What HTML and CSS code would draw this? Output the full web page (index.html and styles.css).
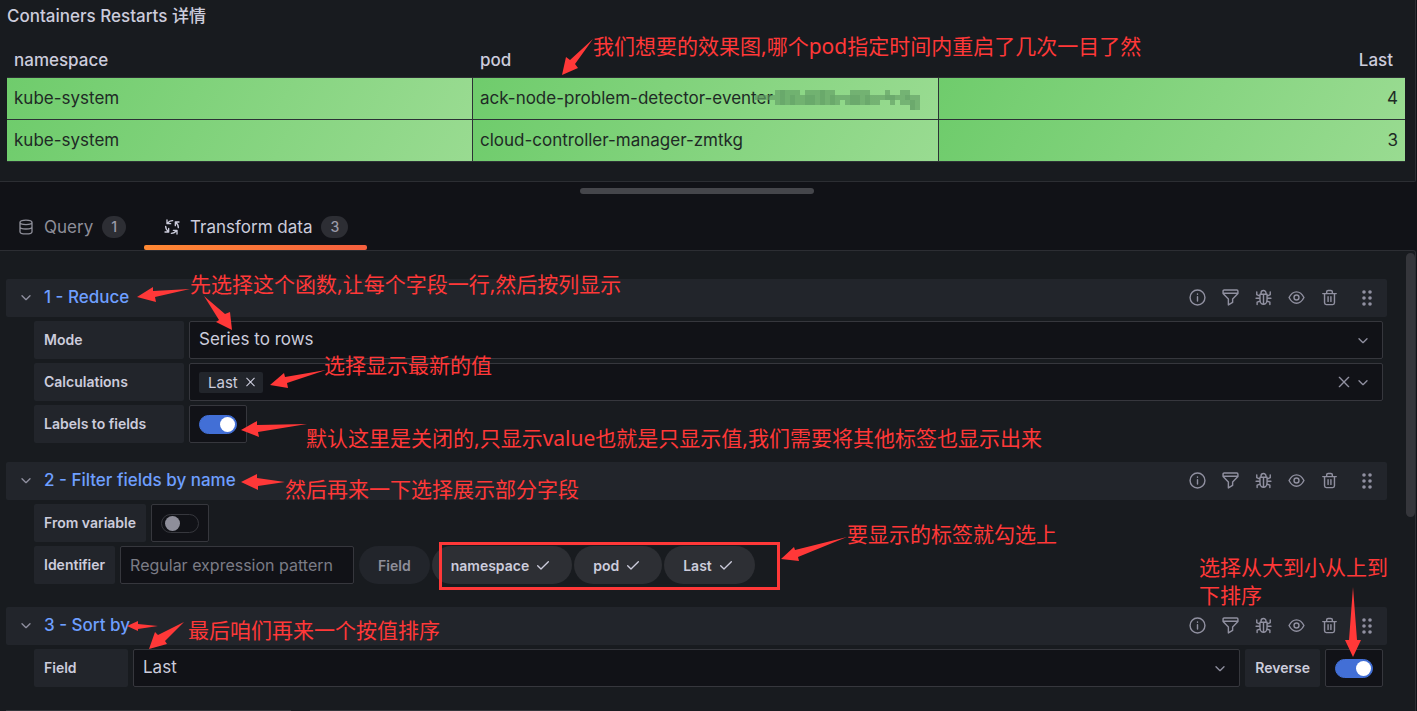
FILE: index.html
```
<!DOCTYPE html>
<html lang="zh-CN">
<head>
    <meta charset="UTF-8">
    <meta name="viewport" content="width=device-width, initial-scale=1.0">
    <title>Containers Restarts 详情</title>
    <link rel="stylesheet" href="styles.css">
</head>
<body>

    <!-- icons shared by the whole page -->
    <svg class="sprite" aria-hidden="true">
        <symbol id="down" viewBox="0 0 24 24"><path d="M6 10l6 6 6-6"/></symbol>
        <symbol id="close" viewBox="0 0 24 24"><path d="M5 5l14 14M19 5L5 19"/></symbol>
        <symbol id="check" viewBox="0 0 24 24"><path d="M4 13l5 5L20 7"/></symbol>
        <symbol id="info" viewBox="0 0 24 24"><circle cx="12" cy="12" r="10.500"/><path d="M12 11v6M12 7v.5"/></symbol>
        <symbol id="filter" viewBox="0 0 24 24"><path d="M3 1.500h18a1.500 1.500 0 0 1 1.500 1.500v3.500L15 14v5L9 22.500V14L1.500 6.500V3A1.500 1.500 0 0 1 3 1.500zM1.500 6h21"/></symbol>
        <symbol id="bug" viewBox="0 0 24 24"><path d="M7 7.500h10v8a5 6 0 0 1-10 0zM8.500 7.500V5.500a3.500 3.500 0 0 1 7 0v2M12 8v13M7 13H1.500M17 13h5.500M7 10L2.500 8V4M17 10l4.500-2V4M7.500 17L3 18.500V22M16.500 17l4.500 1.500V22"/></symbol>
        <symbol id="eye" viewBox="0 0 24 24"><path d="M1.500 12C4 7 8 4 12 4S20 7 22.500 12C20 17 16 20 12 20S4 17 1.500 12z"/><circle cx="12" cy="12" r="3.500"/></symbol>
        <symbol id="trash" viewBox="0 0 24 24"><path d="M2.500 6.500h19M8 6V4a2 2 0 0 1 2-2h4a2 2 0 0 1 2 2v2M5 6.500V19.500A2.500 2.500 0 0 0 7.500 22h9a2.500 2.500 0 0 0 2.500-2.500V6.500M10 11v6.500M14 11v6.500"/></symbol>
        <symbol id="drag" viewBox="0 0 12 20"><g><circle cx="2" cy="5" r="1.800"/><circle cx="8" cy="5" r="1.800"/><circle cx="2" cy="11" r="1.800"/><circle cx="8" cy="11" r="1.800"/><circle cx="2" cy="17" r="1.800"/><circle cx="8" cy="17" r="1.800"/></g></symbol>
        <symbol id="database" viewBox="0 0 24 24"><path d="M3 5C3 .5 21 .5 21 5V19C21 23.500 3 23.500 3 19zM3 5C3 9.500 21 9.500 21 5M3 12C3 16 21 16 21 12"/></symbol>
        <symbol id="process" viewBox="0 0 24 24">
            <path id="arc" d="M13 2.500C10 2.500 7 4 5.500 6.500M4.500 1.500v5.500H10"/>
            <use href="#arc" transform="rotate(90 12 12)"/>
            <use href="#arc" transform="rotate(180 12 12)"/>
            <use href="#arc" transform="rotate(270 12 12)"/>
        </symbol>
    </svg>

    <div id="preview">
        <h1>Containers Restarts 详情</h1>
        <table>
            <thead>
                <tr><th>namespace</th><th>pod</th><th>Last</th></tr>
            </thead>
            <tbody>
                <tr>
                    <td>kube-system</td>
                    <td>
                        <div class="pod">
                            ack-node-problem-detector-eventer
                            <!-- hash of the pod is masked -->
                            <svg class="mosaic" width="170" height="20" aria-hidden="true">
                                <path opacity=".6" d="M20 0h25v15H20zM50 0h30v15H50zM95 0h20v15H95zM0 5h165v5H0zM45 5h5v10h-5zM80 5h5v10h-5zM90 10h5v5h-5zM115 10h5v5h-5zM130 0h5v10h-5zM145 0h10v5h-10zM120 10h5v5h-5zM135 10h5v5h-5zM145 10h20v5h-20zM155 15h10v5h-10z"/>
                                <path opacity=".4" d="M0 5h10v5H0zM25 0h5v15h-5zM35 5h5v10h-5zM50 5h10v10H50zM65 0h5v15h-5zM75 5h5v10h-5zM95 5h10v10H95zM110 5h5v10h-5zM130 5h10v5h-10zM150 5h5v5h-5zM155 10h5v10h-5z"/>
                            </svg>
                        </div>
                    </td>
                    <td>4</td>
                </tr>
                <tr>
                    <td>kube-system</td>
                    <td>cloud-controller-manager-zmtkg</td>
                    <td>3</td>
                </tr>
            </tbody>
        </table>
    </div>

    <div id="resizer"></div>

    <div id="tabs">
        <a href="#query"><svg class="icon"><use href="#database"/></svg>Query<span class="count">1</span></a>
        <a href="#editor" class="active"><svg class="icon"><use href="#process"/></svg>Transform data<span class="count">3</span></a>
    </div>

    <div id="editor">
        <div class="list">

            <div class="step">
                <div class="head">
                    <button class="toggle" aria-label="Collapse"><svg class="icon"><use href="#down"/></svg></button>
                    <h2>1 - Reduce</h2>
                    <div class="actions">
                        <button aria-label="Info"><svg class="icon"><use href="#info"/></svg></button>
                        <button aria-label="Filter"><svg class="icon"><use href="#filter"/></svg></button>
                        <button aria-label="Debug"><svg class="icon"><use href="#bug"/></svg></button>
                        <button aria-label="Disable"><svg class="icon"><use href="#eye"/></svg></button>
                        <button aria-label="Remove"><svg class="icon"><use href="#trash"/></svg></button>
                        <button class="drag" aria-label="Move"><svg><use href="#drag"/></svg></button>
                    </div>
                </div>
                <div class="row wide">
                    <label for="mode">Mode</label>
                    <div class="field">
                        <select id="mode"><option>Series to rows</option></select>
                        <svg class="icon"><use href="#down"/></svg>
                    </div>
                </div>
                <div class="row wide">
                    <label for="calc">Calculations</label>
                    <div class="field box">
                        <span class="tag">Last<button aria-label="Remove Last"><svg class="icon"><use href="#close"/></svg></button></span>
                        <input type="text" id="calc">
                        <button class="clear" aria-label="Clear"><svg class="icon"><use href="#close"/></svg></button>
                        <svg class="icon"><use href="#down"/></svg>
                    </div>
                </div>
                <div class="row wide">
                    <label for="labels">Labels to fields</label>
                    <div class="switch box"><input type="checkbox" id="labels" checked></div>
                </div>
            </div>

            <div class="step inline">
                <div class="head">
                    <button class="toggle" aria-label="Collapse"><svg class="icon"><use href="#down"/></svg></button>
                    <h2>2 - Filter fields by name</h2>
                    <div class="actions">
                        <button aria-label="Info"><svg class="icon"><use href="#info"/></svg></button>
                        <button aria-label="Filter"><svg class="icon"><use href="#filter"/></svg></button>
                        <button aria-label="Debug"><svg class="icon"><use href="#bug"/></svg></button>
                        <button aria-label="Disable"><svg class="icon"><use href="#eye"/></svg></button>
                        <button aria-label="Remove"><svg class="icon"><use href="#trash"/></svg></button>
                        <button class="drag" aria-label="Move"><svg><use href="#drag"/></svg></button>
                    </div>
                </div>
                <div class="row">
                    <label for="variable">From variable</label>
                    <div class="switch box"><input type="checkbox" id="variable"></div>
                </div>
                <div class="row">
                    <label for="regex">Identifier</label>
                    <input type="text" id="regex" class="box" placeholder="Regular expression pattern">
                    <div class="pills">
                        <button class="off">Field</button>
                        <button>namespace<svg class="icon"><use href="#check"/></svg></button>
                        <button>pod<svg class="icon"><use href="#check"/></svg></button>
                        <button>Last<svg class="icon"><use href="#check"/></svg></button>
                    </div>
                </div>
            </div>

            <div class="step inline">
                <div class="head">
                    <button class="toggle" aria-label="Collapse"><svg class="icon"><use href="#down"/></svg></button>
                    <h2>3 - Sort by</h2>
                    <div class="actions">
                        <button aria-label="Info"><svg class="icon"><use href="#info"/></svg></button>
                        <button aria-label="Filter"><svg class="icon"><use href="#filter"/></svg></button>
                        <button aria-label="Debug"><svg class="icon"><use href="#bug"/></svg></button>
                        <button aria-label="Disable"><svg class="icon"><use href="#eye"/></svg></button>
                        <button aria-label="Remove"><svg class="icon"><use href="#trash"/></svg></button>
                        <button class="drag" aria-label="Move"><svg><use href="#drag"/></svg></button>
                    </div>
                </div>
                <div class="row sort">
                    <label for="sortField">Field</label>
                    <div class="field">
                        <select id="sortField"><option>Last</option></select>
                        <svg class="icon"><use href="#down"/></svg>
                    </div>
                    <label for="reverse">Reverse</label>
                    <div class="switch box"><input type="checkbox" id="reverse" checked></div>
                </div>
            </div>

            <div class="footer">
                <button class="add" aria-label="Add another transformation"></button>
                <button aria-label="Delete all transformations"></button>
            </div>
        </div>
        <div class="scrollbar"></div>
    </div>

    <!-- red notes drawn over the page -->
    <div id="notes">
        <svg>
            <path d="M562 75L566 57L570 60L593 39L575 64L578 68z"/>
            <path d="M137 297L153 287L153 291L190 289L155 297L156 302z"/>
            <path d="M232 330L216 322L219 320L204 296L225 314L230 312z"/>
            <path d="M270 385L284 373L285 377L326 370L287 383L288 388z"/>
            <path d="M241 430L257 421L257 425L307 424L258 432L259 437z"/>
            <path d="M241 482L257 474L257 478L285 482L258 486L258 490z"/>
            <path d="M127 626L138 621L138 624L158 626L138 629L138 631z"/>
            <path d="M149 649L155 632L158 635L184 622L165 641L167 644z"/>
            <path d="M781 559L794 547L795 550L847 537L798 557L799 561z"/>
            <path d="M1353 657L1345 640L1349 640L1353 587L1357 640L1361 640z"/>
        </svg>
        <div class="frame"></div>
        <p class="n1">我们想要的效果图,哪个pod指定时间内重启了几次一目了然</p>
        <p class="n2">先选择这个函数,让每个字段一行,然后按列显示</p>
        <p class="n3">选择显示最新的值</p>
        <p class="n4">默认这里是关闭的,只显示value也就是只显示值,我们需要将其他标签也显示出来</p>
        <p class="n5">然后再来一下选择展示部分字段</p>
        <p class="n6">要显示的标签就勾选上</p>
        <p class="n7">最后咱们再来一个按值排序</p>
        <p class="n8">选择从大到小从上到下排序</p>
    </div>

</body>
</html>
```
FILE: styles.css
```
*{
    margin: 0;
    padding: 0;
    box-sizing: border-box;
}
body{
    background-color: #111217;
    color: #ccccdc;
    font-family: Inter, "Noto Sans CJK SC", sans-serif;
    font-size: 17px;
    height: 100vh;
    overflow: hidden;
    position: relative;
    display: flex;
    flex-direction: column;
}
button,input,select{
    font: inherit;
    color: inherit;
    background: none;
    border: none;
    outline: none;
}
button{
    cursor: pointer;
}
.sprite{
    display: none;
}
.icon{
    width: 16px;
    height: 16px;
    flex-shrink: 0;
    fill: none;
    stroke: currentColor;
    stroke-width: 2;
    stroke-linecap: round;
    stroke-linejoin: round;
}

/* table panel */
#preview{
    background-color: #181b1f;
    border: 1px solid #2c2e33;
    border-width: 0 1px 1px 0;
    border-radius: 0 0 2px 0;
    margin-right: 1px;
    padding: 0 10px 19px 7px;
}
#preview h1{
    font-size: 17px;
    font-weight: 500;
    line-height: 32px;
    height: 42px;
}
table{
    width: 100%;
    table-layout: fixed;
    border-collapse: separate;
    border-spacing: 0;
}
th{
    height: 36px;
    padding: 0 7px;
    font-weight: 500;
    text-align: left;
    border-bottom: 1px solid #2c2e33;
}
td{
    height: 42px;
    padding: 0 7px 1px;
    color: #202a25;
    background: linear-gradient(120deg, #6fcc6c, #99db91) padding-box;
    border-bottom: 1px solid #2c3235;
    border-right: 1px solid #2c3235;
}
td:last-child,th:last-child{
    text-align: right;
    border-right: none;
}
th:last-child{
    padding-right: 12px;
}
.pod{
    position: relative;
}
.mosaic{
    position: absolute;
    left: 275px;
    top: 2px;
    fill: #5f9a63;
}

/* tabs */
#resizer{
    width: 234px;
    height: 6px;
    margin: 6px auto 0;
    position: relative;
    left: -12px;
    border-radius: 3px;
    background-color: #45464b;
}
#tabs{
    display: flex;
    height: 56px;
}
#tabs a{
    display: flex;
    align-items: center;
    padding: 10px 18px 0;
    color: #8e8e99;
    text-decoration: none;
    position: relative;
}
#tabs .icon{
    margin-right: 10px;
}
#tabs .count{
    margin-left: 9px;
    padding: 0 9px;
    line-height: 22px;
    font-size: 14px;
    font-weight: 500;
    border-radius: 11px;
    background-color: #2d2e34;
    color: #9a9aa8;
}
#tabs .active{
    padding: 10px 19px 0 20px;
    color: #ccccdc;
}
#tabs .active::after{
    content: "";
    position: absolute;
    left: 0;
    right: 0;
    bottom: 0;
    height: 5px;
    border-radius: 2px;
    background: linear-gradient(90deg, #ff8833, #f55f3e);
}

/* transformations */
#editor{
    flex: 1;
    min-height: 0;
    display: flex;
    background-color: #181b1f;
    border: 1px solid #2c2e33;
    border-width: 1px 1px 0 0;
    border-radius: 0 3px 0 0;
    margin-right: 1px;
}
.list{
    flex: 1;
    overflow: hidden;
    padding: 28px 19px 0 6px;
}
.scrollbar{
    width: 9px;
    height: 264px;
    margin-top: 2px;
    border-radius: 5px;
    background-color: #35363b;
}
.step{
    display: flex;
    flex-direction: column;
    gap: 4px;
    margin-bottom: 19px;
}
.inline{
    margin-bottom: 23px;
}
.head{
    display: flex;
    align-items: center;
    height: 38px;
    padding: 0 13px 2px 12px;
    border-radius: 2px;
    background-color: #22252b;
}
.head button{
    display: flex;
    color: #9090a0;
}
.head h2{
    margin-left: 10px;
    font-size: 17px;
    font-weight: 500;
    color: #6e9fff;
}
.actions{
    display: flex;
    align-items: center;
    gap: 16px;
    margin-left: auto;
}
.actions .icon{
    width: 17px;
    height: 17px;
}
.actions .drag{
    margin-left: 8px;
}
.drag svg{
    width: 12px;
    height: 20px;
    fill: currentColor;
}
.row{
    display: flex;
    gap: 5px;
    height: 38px;
    padding: 0 4px 0 28px;
}
.row label{
    padding: 0 10px;
    line-height: 38px;
    font-size: 14px;
    font-weight: 600;
    white-space: nowrap;
    border-radius: 2px;
    background-color: #22252b;
}
.wide label{
    width: 150px;
}
.sort label:first-child{
    width: 94px;
}
.field{
    flex: 1;
    display: flex;
    align-items: center;
    position: relative;
}
.box,.field select{
    border: 1px solid #36373d;
    border-radius: 2px;
    background-color: #111217;
}
.field select{
    appearance: none;
    width: 100%;
    height: 38px;
    padding: 0 9px 2px;
}
.field select + .icon{
    position: absolute;
    right: 12px;
    pointer-events: none;
}
.field .icon{
    color: #9090a0;
}
.field.box{
    padding: 0 11px 0 9px;
}
.field input{
    flex: 1;
}
.clear{
    display: flex;
    margin-right: 3px;
}
.tag{
    display: flex;
    align-items: center;
    gap: 6px;
    height: 21px;
    padding: 0 6px 0 9px;
    font-size: 15px;
    border-radius: 2px;
    background-color: #22252b;
}
.tag button{
    display: flex;
}
.tag .icon{
    width: 13px;
    color: #ccccdc;
}
.switch{
    display: flex;
    align-items: center;
    justify-content: center;
    width: 58px;
}
.switch input{
    appearance: none;
    width: 38px;
    height: 19px;
    padding: 1px;
    border: 1px solid #36373d;
    border-radius: 10px;
    cursor: pointer;
}
.switch input::before{
    content: "";
    display: block;
    width: 15px;
    height: 15px;
    margin-left: 2px;
    border-radius: 50%;
    background-color: #8e8e9a;
}
.switch input:checked{
    border-color: #426fd6;
    background-color: #426fd6;
}
.switch input:checked::before{
    margin-left: auto;
    background-color: #fff;
}
#regex{
    width: 234px;
    padding: 0 9px;
    font-size: 16px;
}
#regex::placeholder{
    color: #7b7c86;
}
.pills{
    display: flex;
    gap: 2px;
}
.pills button{
    display: flex;
    align-items: center;
    gap: 6px;
    padding: 0 21px 0 19px;
    font-size: 14px;
    font-weight: 600;
    border-radius: 19px;
    background-color: #2d2f34;
}
.pills .off{
    padding: 0 19px;
    color: #8e8e99;
    background-color: #22252b;
}
.footer{
    display: flex;
    gap: 19px;
}
.footer button{
    width: 270px;
    height: 38px;
    background-color: #33353a;
}
.footer .add{
    width: 285px;
}

/* notes */
#notes{
    position: absolute;
    inset: 0;
    pointer-events: none;
    color: #ff3838;
    font: 21px/28px "Noto Sans", "Noto Sans CJK SC", sans-serif;
}
#notes svg{
    width: 100%;
    height: 100%;
    fill: #ff3838;
}
#notes p{
    position: absolute;
    white-space: nowrap;
}
.frame{
    position: absolute;
    left: 439px;
    top: 542px;
    width: 341px;
    height: 48px;
    border: 3px solid #ff3838;
}
.n1{ left: 593px; top: 32px; }
.n2{ left: 190px; top: 270px; }
.n3{ left: 324px; top: 351px; }
.n4{ left: 306px; top: 424px; }
.n5{ left: 285px; top: 475px; }
.n6{ left: 847px; top: 520px; }
.n7{ left: 188px; top: 616px; }
#notes .n8{ left: 1199px; top: 553px; width: 194px; white-space: normal; }
```
